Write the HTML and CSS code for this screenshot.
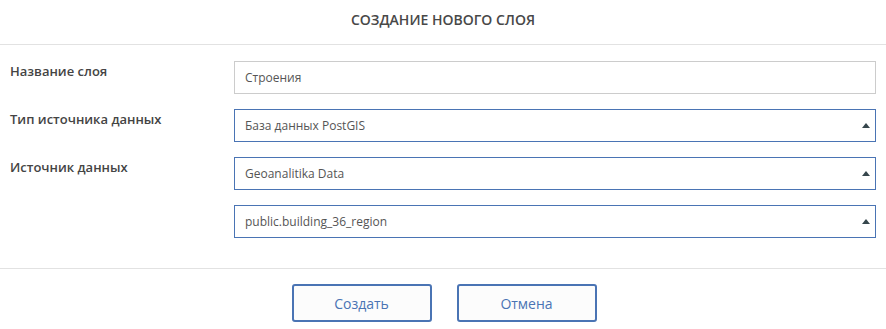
FILE: index.html
```html
<!DOCTYPE html>
<html lang="ru">

<head>
  <meta charset="UTF-8">
  <meta name="viewport" content="width=device-width, initial-scale=1.0">
  <title>Создание нового слоя</title>
  <link rel="stylesheet" href="styles.css">
</head>

<body>
  <div class="dialog">
    <div class="dialog-header">Создание нового слоя</div>

    <form class="dialog-body" id="layerForm">
      <div class="row">
        <label class="row-label" for="name">Название слоя</label>
        <div class="row-fields">
          <input class="field" type="text" id="name" value="Строения">
        </div>
      </div>
      <div class="row">
        <label class="row-label">Тип источника данных</label>
        <div class="row-fields">
          <div class="field select">База данных PostGIS<span class="arrow"></span></div>
        </div>
      </div>
      <div class="row">
        <label class="row-label">Источник данных</label>
        <div class="row-fields">
          <div class="field select">Geoanalitika Data<span class="arrow"></span></div>
          <div class="field select">public.building_36_region<span class="arrow"></span></div>
        </div>
      </div>
    </form>

    <div class="dialog-footer">
      <button class="btn" type="button">Создать</button>
      <button class="btn" type="button">Отмена</button>
    </div>
  </div>
</body>

</html>
```

FILE: styles.css
```css
body {
  font-family: "Open Sans", "Liberation Sans", sans-serif;
  margin: 0;
  padding: 0;
  background: #fff;
  color: #333;
}

.dialog-header {
  height: 44px;
  line-height: 40px;
  text-align: center;
  font-size: 14px;
  font-weight: 600;
  text-transform: uppercase;
  color: #484848;
  border-bottom: 1px solid #e2e2e2;
}

.dialog-body {
  padding: 16px 10px 30px 10px;
  border-bottom: 1px solid #e2e2e2;
  display: flex;
  flex-direction: column;
  gap: 15px;
}

.row {
  display: flex;
}

.row-label {
  width: 224px;
  flex-shrink: 0;
  font-size: 13px;
  font-weight: 600;
  color: #444;
  padding-top: 1px;
}

.row-fields {
  flex: 1;
  display: flex;
  flex-direction: column;
  gap: 15px;
}

.field {
  box-sizing: border-box;
  height: 33px;
  width: 100%;
  margin: 0;
  padding: 0 10px;
  border: 1px solid #cccccc;
  font-family: inherit;
  font-size: 12px;
  color: #555;
  line-height: 31px;
  outline: none;
}

.select {
  position: relative;
  border-color: #4a74b4;
}

.arrow {
  position: absolute;
  right: 5px;
  top: 13px;
  width: 0;
  height: 0;
  border-left: 4px solid transparent;
  border-right: 4px solid transparent;
  border-bottom: 5px solid #36464c;
}

.dialog-footer {
  display: flex;
  justify-content: center;
  gap: 25px;
  padding-top: 15px;
  padding-left: 2px;
}

.btn {
  width: 140px;
  height: 38px;
  background: #fcfcfc;
  border: 2px solid #4a74b4;
  border-radius: 3px;
  font-family: inherit;
  font-size: 14px;
  color: #4a74b4;
  cursor: pointer;
}
```
